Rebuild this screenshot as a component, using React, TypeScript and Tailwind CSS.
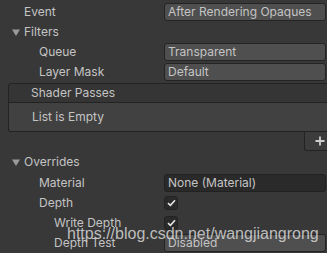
import type { ReactNode } from 'react';

// 접힘 삼각형
function Fold() {
  return (
    <svg width="8" height="7" viewBox="0 0 8 7" className="mr-[4px] shrink-0">
      <path d="M0 0.5 H8 L4 7 Z" fill="#9a9a9a" />
    </svg>
  );
}

function Check() {
  return (
    <div className="flex h-[14px] w-[14px] items-center justify-center rounded-[3px] border border-[#232323] bg-[#2a2a2a]">
      <svg width="9" height="8" viewBox="0 0 9 8">
        <path d="M1 4.2 L3.4 6.4 L8 1.2" fill="none" stroke="#e4e4e4" strokeWidth="1.6" />
      </svg>
    </div>
  );
}

function Popup({ children, dark }: { children: ReactNode; dark?: boolean }) {
  return (
    <div
      className={
        dark
          ? 'flex h-[18px] flex-1 items-center rounded-[3px] border border-[#212121] bg-[#2a2a2a] pl-[3px]'
          : 'flex h-[18px] flex-1 items-center rounded-[3px] border border-[#242424] bg-[#4f4f4f] pl-[3px]'
      }
    >
      {children}
    </div>
  );
}

function Row({
  indent,
  label,
  fold,
  children,
}: {
  indent: string;
  label: string;
  fold?: boolean;
  children?: ReactNode;
}) {
  return (
    <div className="flex h-5 items-center">
      <div className={`flex w-[164px] shrink-0 items-center ${indent}`}>
        {fold && <Fold />}
        <span>{label}</span>
      </div>
      <div className="flex flex-1 items-center pr-[1px]">{children}</div>
    </div>
  );
}

export default function App() {
  return (
    <div
      className="relative h-[253px] w-[327px] overflow-hidden bg-[#383838] pt-[2px] text-[12px] text-[#c4c4c4]"
      style={{ fontFamily: 'Inter, "Noto Sans", sans-serif' }}
    >
      <Row indent="pl-[24px]" label="Event">
        <Popup>After Rendering Opaques</Popup>
      </Row>
      <Row indent="pl-[12px]" label="Filters" fold />
      <Row indent="pl-[39px]" label="Queue">
        <Popup>Transparent</Popup>
      </Row>
      <Row indent="pl-[39px]" label="Layer Mask">
        <Popup>Default</Popup>
      </Row>

      {/* Shader Passes 리스트 */}
      <div className="ml-[8px] mt-[1px] w-[330px]">
        <div className="flex h-[20px] items-center rounded-t-[3px] border border-[#232323] bg-[#353535] pl-[22px]">
          Shader Passes
        </div>
        <div className="flex h-[29px] items-center rounded-bl-[3px] border border-t-0 border-[#232323] bg-[#414141] pl-[23px]">
          List is Empty
        </div>
        <div className="flex justify-end">
          <div className="mr-[11px] flex h-[19px] w-[23px] items-center justify-center rounded-bl-[3px] border border-t-0 border-r-0 border-[#232323] bg-[#3c3c3c] pl-[8px]">
            <svg width="10" height="10" viewBox="0 0 10 10">
              <path d="M5 0.5 V9.5 M0.5 5 H9.5" stroke="#cfcfcf" strokeWidth="1.8" />
            </svg>
          </div>
        </div>
      </div>

      <div className="mt-[1px]">
        <Row indent="pl-[12px]" label="Overrides" fold />
        <div className="h-[1px]" />
        <Row indent="pl-[39px]" label="Material">
          <Popup dark>None (Material)</Popup>
        </Row>
        <Row indent="pl-[39px]" label="Depth">
          <Check />
        </Row>
        <Row indent="pl-[54px]" label="Write Depth">
          <Check />
        </Row>
        <Row indent="pl-[54px]" label="Depth Test">
          <Popup>Disabled</Popup>
        </Row>
      </div>

      {/* 워터마크 */}
      <div
        className="pointer-events-none absolute left-[67px] top-[224px] text-[16px] leading-[20px] text-[#cfcfcf]/90"
        style={{ fontFamily: '"Liberation Sans", Arial, sans-serif' }}
      >
        https://blog.csdn.net/wangjiangrong
      </div>
    </div>
  );
}
